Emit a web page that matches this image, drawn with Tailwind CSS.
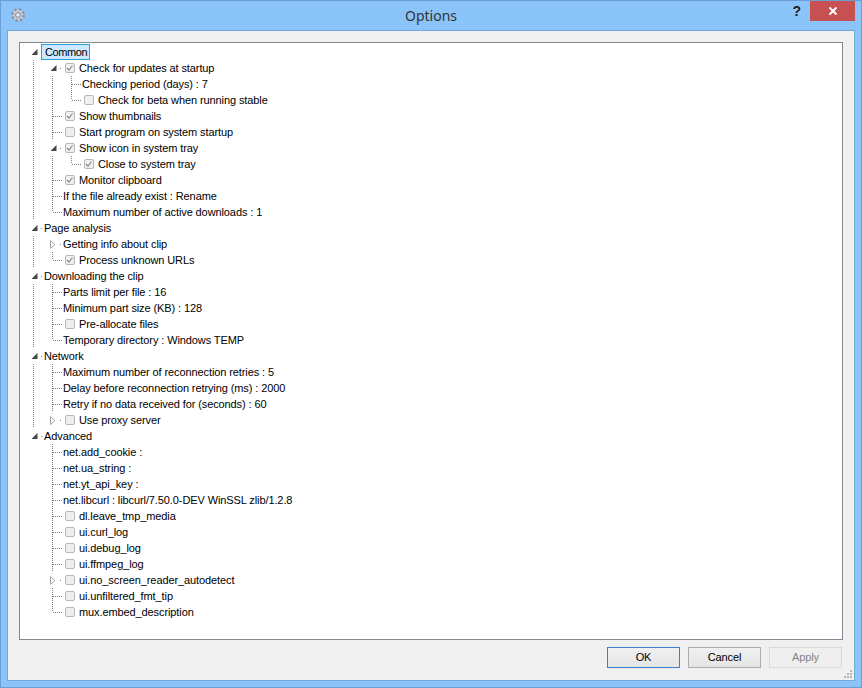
<!DOCTYPE html>
<html lang="en">
<head>
    <meta charset="UTF-8">
    <title>Options</title>
    <script src="https://cdn.jsdelivr.net/npm/@tailwindcss/browser@4"></script>
</head>
<body class="w-[862px] h-[688px] overflow-hidden">
    <div class="flex flex-col w-full h-full bg-[#8ac4f8] border border-[#6b9fd4] font-['Liberation_Sans',sans-serif] text-[11px] tracking-[-0.1px] text-black">
        <!-- Title bar -->
        <div class="relative flex items-center h-[29px] shrink-0">
            <svg class="ml-[9px] mb-[1px]" width="16" height="16" viewBox="0 0 16 16">
                <circle cx="8" cy="8" r="5.6" fill="#c9ced6" stroke="#8d97a5" stroke-width="2.8" stroke-dasharray="2.4 2"/>
                <circle cx="8" cy="8" r="4.4" fill="#c9ced6"/>
                <circle cx="8" cy="8" r="2.4" fill="#e8edf3" stroke="#78828f"/>
            </svg>
            <div class="absolute left-0 right-0 top-[4px] text-center text-[14px] tracking-normal text-[#333] font-['Noto_Sans',sans-serif]">Options</div>
            <div class="ml-auto mr-[60px] mb-[8px] text-[14px] font-bold text-[#222]">?</div>
            <div class="absolute right-[6px] top-0 flex items-center justify-center w-[45px] h-[20px] bg-[#c75050]">
                <svg width="10" height="10" viewBox="0 0 10 10"><path d="M1.5 1.5 8.5 8.5M8.5 1.5 1.5 8.5" stroke="#fff" stroke-width="2"/></svg>
            </div>
        </div>

        <!-- Client area -->
        <div class="relative flex flex-col flex-1 mx-[6px] mb-[6px] px-[11px] pt-[11px] bg-[#f0f0f0] border border-[#76a8d8]">
            <div id="tree" class="h-[598px] pt-[1px] pl-[4px] bg-white border border-[#828790]"></div>
            <div class="flex justify-end gap-[8px] mt-[7px] mr-[1px]">
                <button class="w-[73px] h-[21px] border border-[#3c7fd1] bg-gradient-to-b from-[#f0f0f0] to-[#e5e5e5]">OK</button>
                <button class="w-[73px] h-[21px] border border-[#acacac] bg-gradient-to-b from-[#f0f0f0] to-[#e5e5e5]">Cancel</button>
                <button class="w-[73px] h-[21px] border border-[#d9d9d9] bg-[#efefef] text-[#838383]">Apply</button>
            </div>
            <svg class="absolute right-[2px] bottom-[2px]" width="8" height="8" viewBox="0 0 8 8" fill="#b5b5b5">
                <path d="M6 0h2v2H6zM3 3h2v2H3zM6 3h2v2H6zM0 6h2v2H0zM3 6h2v2H3zM6 6h2v2H6z"/>
            </svg>
        </div>
    </div>

    <script>
        // e = expanded, c = collapsed, v = guide, t = tee, l = elbow, _ = blank
        const dots = 'stroke="#808080" stroke-dasharray="1 1"';
        const cells = {
            _: '',
            v: `<path d="M9.5 0V16" ${dots}/>`,
            t: `<path d="M9.5 0V16M10 8.5H19" ${dots}/>`,
            l: `<path d="M9.5 0V8M10 8.5H19" ${dots}/>`,
            e: `<path d="M13.5 5V11H7.5Z" fill="#444"/><path d="M17 8.5H18" ${dots}/>`,
            c: `<path d="M7.5 4.5 12 8.5 7.5 12.5Z" fill="#fff" stroke="#a6a6a6"/><path d="M17 8.5H18" ${dots}/>`,
        };

        const rows = [
            ['e', 'Common', null, true],
            ['ve', 'Check for updates at startup', 1],
            ['vvt', 'Checking period (days) : 7'],
            ['vvl', 'Check for beta when running stable', 0],
            ['vt', 'Show thumbnails', 1],
            ['vt', 'Start program on system startup', 0],
            ['ve', 'Show icon in system tray', 1],
            ['vvl', 'Close to system tray', 1],
            ['vt', 'Monitor clipboard', 1],
            ['vt', 'If the file already exist : Rename'],
            ['vl', 'Maximum number of active downloads : 1'],
            ['e', 'Page analysis'],
            ['vc', 'Getting info about clip'],
            ['vl', 'Process unknown URLs', 1],
            ['e', 'Downloading the clip'],
            ['vt', 'Parts limit per file : 16'],
            ['vt', 'Minimum part size (KB) : 128'],
            ['vt', 'Pre-allocate files', 0],
            ['vl', 'Temporary directory : Windows TEMP'],
            ['e', 'Network'],
            ['vt', 'Maximum number of reconnection retries : 5'],
            ['vt', 'Delay before reconnection retrying (ms) : 2000'],
            ['vt', 'Retry if no data received for (seconds) : 60'],
            ['vc', 'Use proxy server', 0],
            ['e', 'Advanced'],
            ['_t', 'net.add_cookie :'],
            ['_t', 'net.ua_string :'],
            ['_t', 'net.yt_api_key :'],
            ['_t', 'net.libcurl : libcurl/7.50.0-DEV WinSSL zlib/1.2.8'],
            ['_t', 'dl.leave_tmp_media', 0],
            ['_t', 'ui.curl_log', 0],
            ['_t', 'ui.debug_log', 0],
            ['_t', 'ui.ffmpeg_log', 0],
            ['_c', 'ui.no_screen_reader_autodetect', 0],
            ['_t', 'ui.unfiltered_fmt_tip', 0],
            ['_l', 'mux.embed_description', 0],
        ];

        const tick = '<path d="M2 5 4 7 7.5 2.5" fill="none" stroke="#8a8a8a" stroke-width="1.2"/>';

        document.getElementById('tree').innerHTML = rows.map(([guides, label, check, selected]) => {
            const indent = [...guides].map(g =>
                `<svg class="shrink-0" width="19" height="16" viewBox="0 0 19 16">${cells[g]}</svg>`).join('');
            const box = check === undefined || check === null ? '' :
                `<span class="flex items-center justify-center w-[10px] h-[10px] ml-[3px] mr-[4px] rounded-[2px] border border-[#b8b8b8] bg-[#efefef]">
                    ${check ? `<svg class="shrink-0" width="10" height="10" viewBox="0 0 10 10">${tick}</svg>` : ''}
                </span>`;
            const text = selected
                ? `<span class="pl-[3px] w-[49px] h-[16px] leading-[15px] tracking-[-0.4px] bg-[#cde8ff] border border-[#26a0da] -ml-[2px]">${label}</span>`
                : `<span class="${box ? '' : 'ml-[1px]'} whitespace-nowrap">${label}</span>`;
            return `<div class="flex items-center h-[16px]">${indent}${box}${text}</div>`;
        }).join('');
    </script>
</body>
</html>
